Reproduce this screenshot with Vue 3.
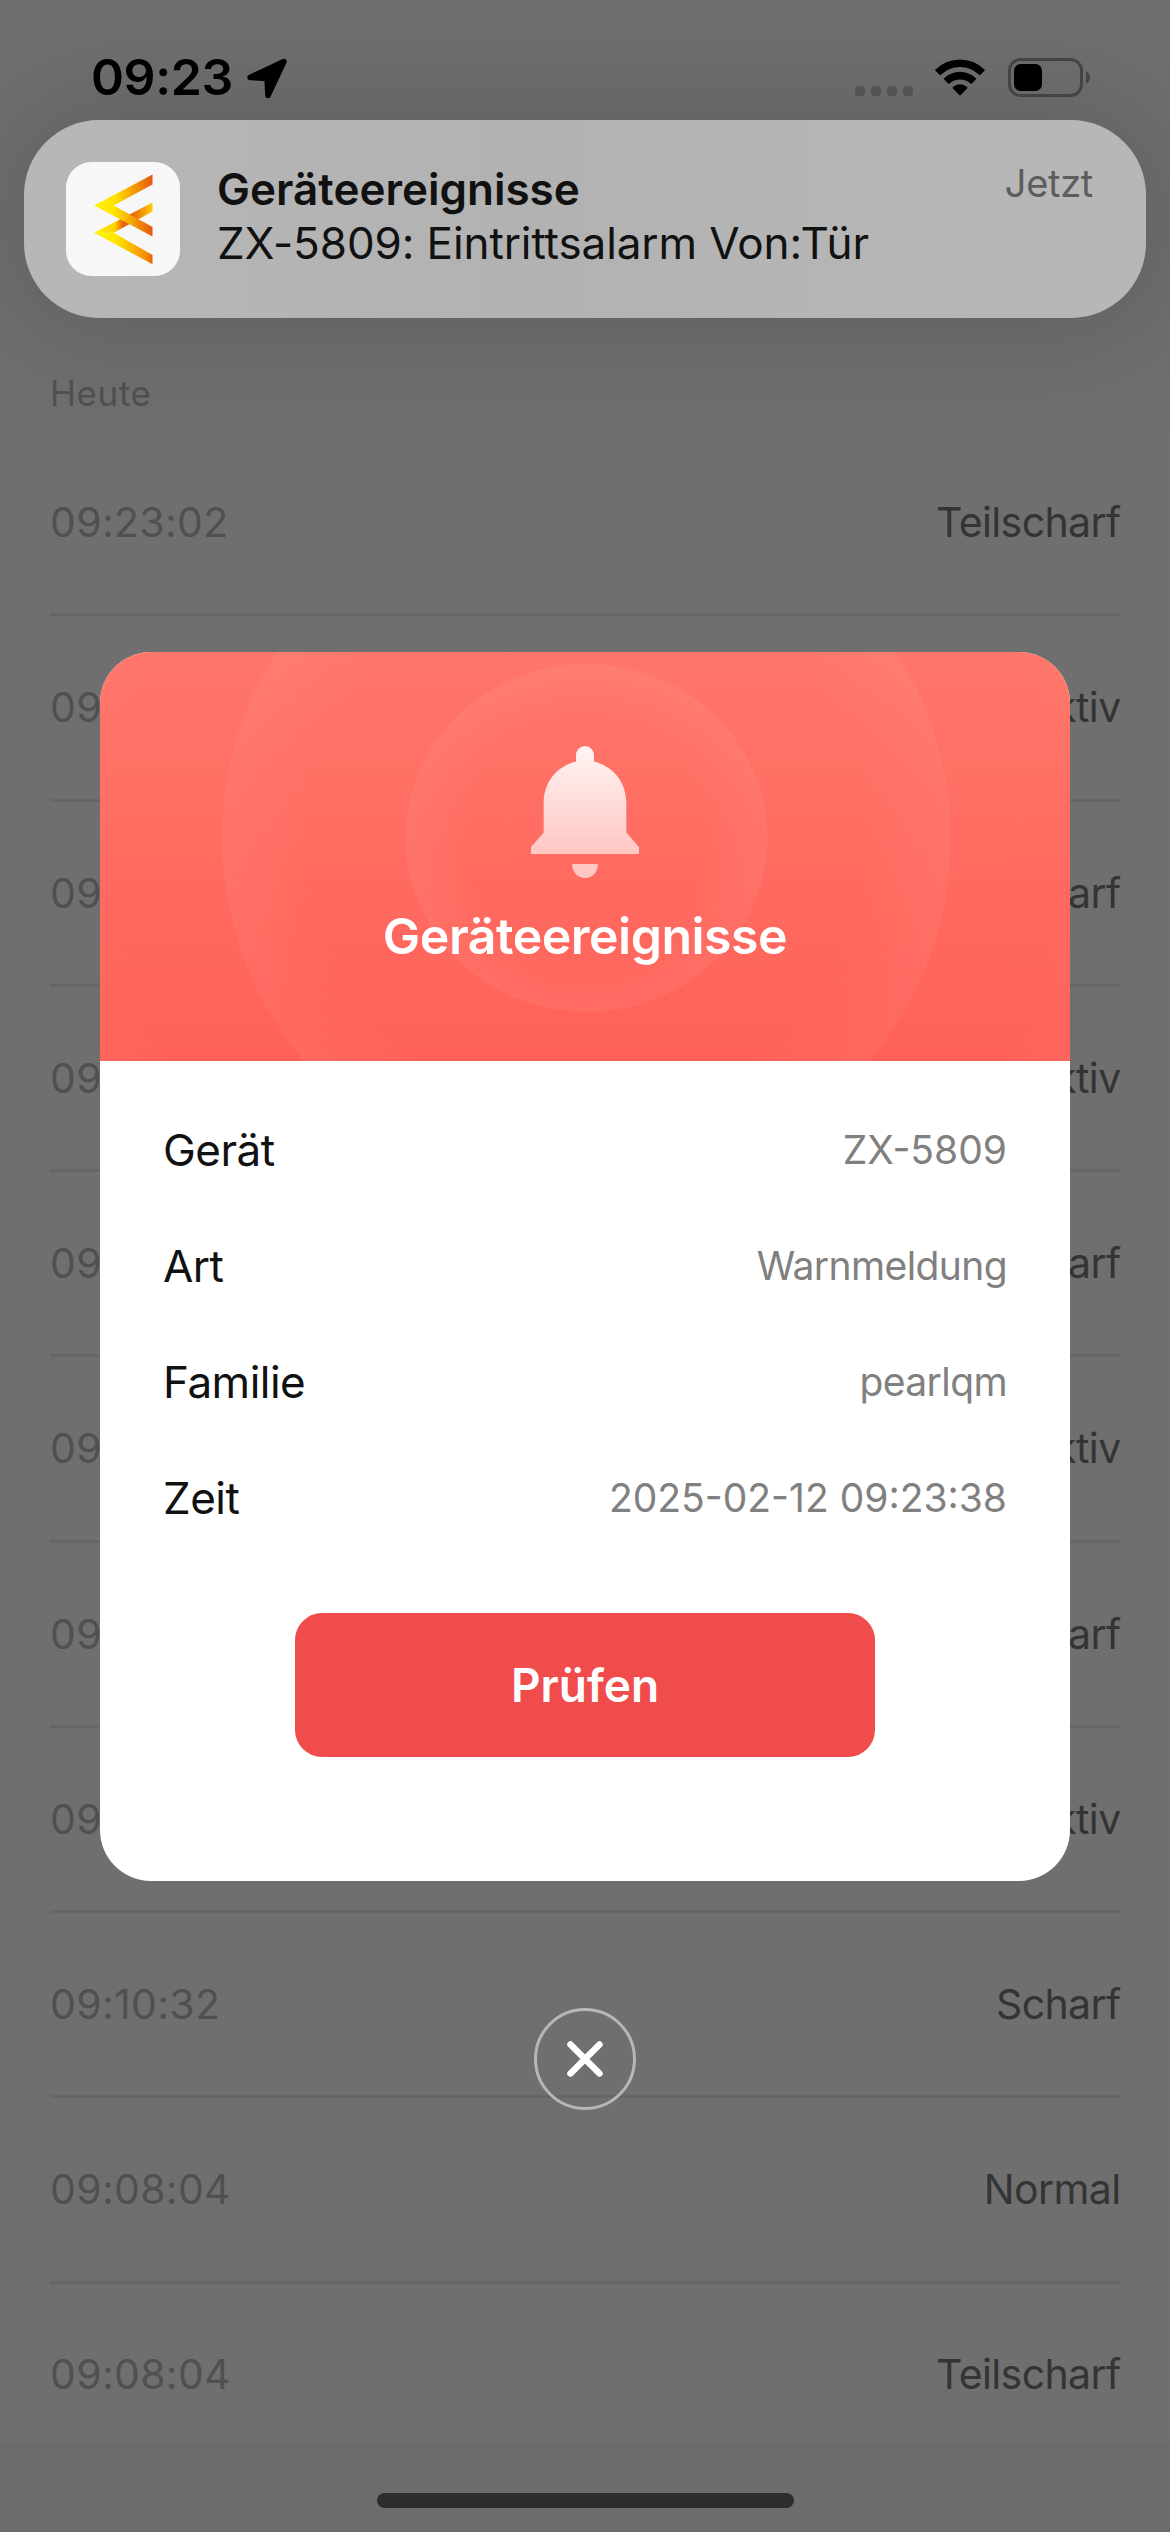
<script setup>
const events = [
  { time: '09:23:02', state: 'Teilscharf' },
  { time: '09:22:41', state: 'Inaktiv' },
  { time: '09:20:17', state: 'Scharf' },
  { time: '09:18:55', state: 'Inaktiv' },
  { time: '09:17:36', state: 'Scharf' },
  { time: '09:15:20', state: 'Inaktiv' },
  { time: '09:13:48', state: 'Scharf' },
  { time: '09:11:09', state: 'Inaktiv' },
  { time: '09:10:32', state: 'Scharf' },
  { time: '09:08:04', state: 'Normal' },
  { time: '09:08:04', state: 'Teilscharf' },
]

const details = [
  { label: 'Gerät', value: 'ZX-5809', kind: 'device' },
  { label: 'Art', value: 'Warnmeldung', kind: 'type' },
  { label: 'Familie', value: 'pearlqm', kind: 'family' },
  { label: 'Zeit', value: '2025-02-12 09:23:38', kind: 'time' },
]
</script>

<template>
  <div class="screen">
    <main class="page">
      <div class="section-head"><span>Heute</span></div>
      <ul class="events">
        <li v-for="(e, i) in events" :key="i" class="event">
          <span class="event-time">{{ e.time }}</span>
          <span class="event-state">{{ e.state }}</span>
        </li>
      </ul>
      <div class="home-area"><div class="home-bar"></div></div>
    </main>

    <section class="notification">
      <svg class="app-icon" viewBox="0 0 340 340">
        <defs>
          <linearGradient id="lgUp" gradientUnits="userSpaceOnUse" x1="84" y1="0" x2="258" y2="0">
            <stop offset="0" stop-color="#fff200" />
            <stop offset="0.35" stop-color="#ffe400" />
            <stop offset="1" stop-color="#e8560f" />
          </linearGradient>
          <linearGradient id="lgCross" gradientUnits="userSpaceOnUse" x1="84" y1="0" x2="258" y2="0">
            <stop offset="0" stop-color="#fff200" />
            <stop offset="0.35" stop-color="#ffd400" />
            <stop offset="0.5" stop-color="#e8600f" />
            <stop offset="0.64" stop-color="#e8600f" />
            <stop offset="1" stop-color="#ffcc00" />
          </linearGradient>
          <linearGradient id="lgLow" gradientUnits="userSpaceOnUse" x1="84" y1="0" x2="258" y2="0">
            <stop offset="0" stop-color="#fff200" />
            <stop offset="0.35" stop-color="#ffe800" />
            <stop offset="0.9" stop-color="#f58a00" />
            <stop offset="1" stop-color="#e8600f" />
          </linearGradient>
        </defs>
        <rect width="340" height="340" rx="76" fill="#f7f7f7" />
        <path d="M84 211L258 121V148L142 211Z" fill="url(#lgCross)" />
        <path d="M84 211H142L258 277V305Z" fill="url(#lgLow)" />
        <path d="M84 130L258 37V67L142 130L258 194V222Z" fill="url(#lgUp)" />
      </svg>
      <div class="note-text">
        <div class="note-title">Geräteereignisse</div>
        <div class="note-body">ZX-5809: Eintrittsalarm Von:Tür</div>
      </div>
      <div class="note-time">Jetzt</div>
    </section>

    <header class="status">
      <div class="status-left">
        <span class="clock">09:23</span>
        <svg class="arrow" viewBox="0 0 40 40">
          <path d="M3 19.400L37 3.600L21 37.500L20 20.400Z" stroke="#000" stroke-width="5.500" stroke-linejoin="round" />
        </svg>
      </div>
      <div class="status-right">
        <svg class="dots" viewBox="0 0 58 10">
          <rect v-for="n in 4" :key="n" :x="(n - 1) * 16" width="10" height="10" rx="3.6" fill="#545454" />
        </svg>
        <svg class="wifi" viewBox="0 0 50 38">
          <path d="M0.6 11.5a34.5 34.5 0 0 1 48.8 0q.6.7 0 1.4l-3.9 3.9q-.7.7-1.4 0a27.2 27.2 0 0 0-38.2 0q-.7.7-1.4 0L.6 12.900q-.6-.7 0-1.400z" />
          <path d="M9.200 20.200a22.500 22.500 0 0 1 31.600 0q.7.7 0 1.400l-4 3.900q-.7.600-1.400 0a15.200 15.200 0 0 0-20.800 0q-.7.600-1.400 0l-4-3.900q-.7-.7 0-1.400z" />
          <path d="M17.900 29a10.600 10.600 0 0 1 14.200 0q.7.700 0 1.500l-6.300 6.600q-.8.800-1.600 0l-6.300-6.600q-.7-.800 0-1.500z" />
        </svg>
        <svg class="battery" viewBox="0 0 83 39">
          <rect x="1.500" y="1.500" width="72" height="36" rx="11" fill="none" stroke="#444" stroke-width="3" />
          <rect x="6" y="6" width="28" height="27" rx="6.500" />
          <path d="M78 13.500q4 2 4 6t-4 6z" fill="#444" />
        </svg>
      </div>
    </header>

    <section class="dialog">
      <div class="hero">
        <svg class="rings" viewBox="0 0 970 409">
          <defs>
            <radialGradient id="ringOuter">
              <stop offset="0.86" stop-color="#fff" stop-opacity="0" />
              <stop offset="1" stop-color="#fff" stop-opacity="0.03" />
            </radialGradient>
            <radialGradient id="ringMiddle">
              <stop offset="0.76" stop-color="#fff" stop-opacity="0" />
              <stop offset="1" stop-color="#fff" stop-opacity="0.045" />
            </radialGradient>
            <radialGradient id="ringInner">
              <stop offset="0.66" stop-color="#fff" stop-opacity="0" />
              <stop offset="1" stop-color="#fff" stop-opacity="0.055" />
            </radialGradient>
            <linearGradient id="bell" x1="0" y1="0" x2="0" y2="1">
              <stop offset="0" stop-color="#fff" stop-opacity="0.92" />
              <stop offset="1" stop-color="#fff" stop-opacity="0.62" />
            </linearGradient>
          </defs>
          <ellipse cx="486.500" cy="186" rx="547" ry="530" fill="url(#ringOuter)" />
          <ellipse cx="486.500" cy="186" rx="364.500" ry="353" fill="url(#ringMiddle)" />
          <ellipse cx="486.500" cy="186" rx="181" ry="174" fill="url(#ringInner)" />
          <g transform="translate(431 94)">
            <path d="M0 108V101L12.700 86.500V57C12.700 37 25 20.500 45 15.500V9a9 9 0 0 1 18 0v6.500C83 20.500 95.300 37 95.300 57V86.500L108 101V108Z" fill="url(#bell)" />
            <path d="M41 118H67C66.500 126.500 61.500 132 54 132S41.500 126.500 41 118Z" fill="#fff" fill-opacity="0.62" />
          </g>
        </svg>
        <h2 class="hero-title">Geräteereignisse</h2>
      </div>
      <dl class="details">
        <div v-for="d in details" :key="d.kind" class="detail">
          <dt>{{ d.label }}</dt>
          <dd :class="'value-' + d.kind">{{ d.value }}</dd>
        </div>
      </dl>
      <button class="check">Prüfen</button>
    </section>

    <button class="close" aria-label="Schließen">
      <svg viewBox="0 0 36 36">
        <path d="M3.500 3.500L32.500 32.500M32.500 3.500L3.500 32.500" stroke="#fff" stroke-width="6.500" stroke-linecap="round" />
      </svg>
    </button>
  </div>
</template>

<style>
body {
  margin: 0;
}
</style>

<style scoped>
.screen {
  position: relative;
  width: 1170px;
  height: 2532px;
  overflow: hidden;
  background: #6f6f6f;
  font-family: Inter, "Liberation Sans", sans-serif;
  white-space: nowrap;
}
.page {
  display: flex;
  flex-direction: column;
  height: 100%;
}
.section-head {
  box-sizing: border-box;
  height: 431px;
  padding: 356px 50px 0;
  background: #6e6e6e;
  color: #505050;
  font-size: 35px;
  line-height: 75px;
  letter-spacing: 0.6px;
}
.events {
  list-style: none;
  margin: 0;
  padding: 0 50px;
  height: 2011px;
}
.event {
  box-sizing: border-box;
  display: flex;
  align-items: center;
  justify-content: space-between;
  height: 185.250px;
  border-bottom: 3px solid #666;
  font-size: 41px;
}
.event:last-child {
  height: 184px;
  border-bottom-color: transparent;
}
.event-time {
  color: #505050;
  letter-spacing: 0.3px;
}
.event-state {
  color: #343434;
  letter-spacing: -0.6px;
  margin-right: -0.6px;
}
.home-area {
  box-sizing: border-box;
  flex: 1;
  padding-top: 51px;
  background: #6c6c6c;
}
.home-bar {
  width: 417px;
  height: 15px;
  margin: 0 auto;
  border-radius: 8px;
  background: #2d2d2d;
}
.status {
  position: absolute;
  inset: 0 0 auto 0;
  box-sizing: border-box;
  height: 120px;
  padding: 58px 79px 0 91px;
  display: flex;
  justify-content: space-between;
  align-items: flex-start;
}
.status-left,
.status-right {
  display: flex;
}
.clock {
  width: 156px;
  font-size: 50px;
  font-weight: 600;
  line-height: 39px;
  color: #000;
  letter-spacing: -0.4px;
}
.arrow {
  width: 40px;
  height: 40px;
}
.dots {
  width: 58px;
  height: 10px;
  margin: 28px 22px 0 0;
}
.wifi {
  width: 50px;
  height: 38px;
  margin-right: 23px;
}
.battery {
  width: 83px;
  height: 39px;
}
.notification {
  position: absolute;
  left: 24px;
  top: 120px;
  box-sizing: border-box;
  width: 1122px;
  height: 198px;
  padding: 42px 53px 0 42px;
  display: flex;
  border-radius: 75px;
  background: linear-gradient(90deg, #b7b7b7, #b2b2b2 45%, #b7b7b7 90%);
  box-shadow: 0 0 110px rgba(0, 0, 0, 0.16);
}
.app-icon {
  flex: none;
  width: 114px;
  height: 114px;
}
.note-text {
  flex: 1;
  margin-left: 37px;
  color: #111;
  line-height: 54px;
}
.note-title {
  font-size: 44px;
  font-weight: 600;
  letter-spacing: 0;
}
.note-body {
  font-size: 44px;
  letter-spacing: -0.1px;
}
.note-time {
  height: 43px;
  line-height: 43px;
  font-size: 38px;
  letter-spacing: -0.3px;
  color: #5d5d5d;
}
.dialog {
  position: absolute;
  left: 100px;
  top: 652px;
  width: 970px;
  height: 1229px;
  display: flex;
  flex-direction: column;
  align-items: center;
  overflow: hidden;
  border-radius: 51px;
  background: #fff;
}
.hero {
  position: relative;
  box-sizing: border-box;
  width: 100%;
  height: 409px;
  padding-top: 254px;
  background: linear-gradient(180deg, #ff766a, #ff6158);
}
.rings {
  position: absolute;
  inset: 0;
  width: 970px;
  height: 409px;
}
.hero-title {
  position: relative;
  margin: 0;
  text-align: center;
  color: #fff;
  font-size: 50px;
  font-weight: 600;
  line-height: 61px;
  letter-spacing: -0.5px;
}
.details {
  box-sizing: border-box;
  width: 100%;
  margin: 0;
  padding: 31px 63px 0;
}
.detail {
  display: flex;
  justify-content: space-between;
  align-items: center;
  height: 116px;
}
.detail dt {
  font-size: 44px;
  color: #111;
  letter-spacing: -0.5px;
}
.detail dd {
  margin: 0;
  padding-bottom: 2px;
  font-size: 39px;
  color: #808080;
}
.detail .value-type,
.detail .value-family {
  letter-spacing: -0.6px;
}
.check {
  margin-top: 57px;
  width: 580px;
  height: 144px;
  padding: 0;
  border: 0;
  border-radius: 27px;
  background: #f04c4b;
  color: #fff;
  font: 600 46px Inter, sans-serif;
}
.close {
  position: absolute;
  left: 534px;
  top: 2008px;
  box-sizing: border-box;
  width: 102px;
  height: 102px;
  padding: 0;
  display: flex;
  align-items: center;
  justify-content: center;
  border: 3px solid #b7b7b7;
  border-radius: 50%;
  background: none;
}
.close svg {
  width: 36px;
  height: 36px;
}
</style>
